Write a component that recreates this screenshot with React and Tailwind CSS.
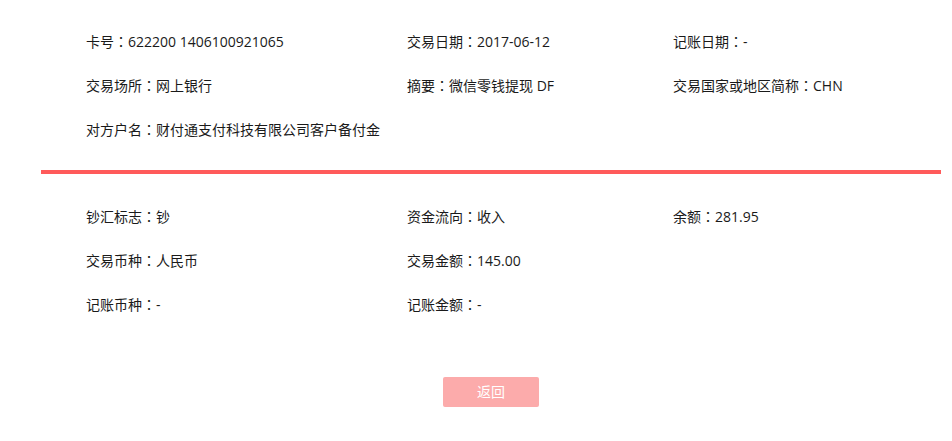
import React from "react";

const top = [
  ["卡号：622200 1406100921065", "交易日期：2017-06-12", "记账日期：-"],
  ["交易场所：网上银行", "摘要：微信零钱提现 DF", "交易国家或地区简称：CHN"],
  ["对方户名：财付通支付科技有限公司客户备付金", "", ""],
];

const bottom = [
  ["钞汇标志：钞", "资金流向：收入", "余额：281.95"],
  ["交易币种：人民币", "交易金额：145.00", ""],
  ["记账币种：-", "记账金额：-", ""],
];

// full-width colon centred, like the original font
function Cell({ text }) {
  if (!text) return <div />;
  const [label, value] = text.split("：");
  return (
    <div className="whitespace-nowrap">
      {label}
      <span style={{ fontFamily: '"Noto Sans CJK TC", sans-serif' }}>：</span>
      {value}
    </div>
  );
}

function Rows({ rows }) {
  return (
    <div className="pl-[45px]">
      {rows.map((row, i) => (
        <div key={i} className="grid grid-cols-[321px_266px_1fr] h-[44px] items-center">
          {row.map((cell, j) => (
            <Cell key={j} text={cell} />
          ))}
        </div>
      ))}
    </div>
  );
}

export default function App() {
  return (
    <div
      className="w-[952px] h-[441px] bg-white text-[14px] leading-[20px] text-[#1a1a1a]"
      style={{ fontFamily: '"Open Sans", "Noto Sans CJK SC", sans-serif' }}
    >
      <div className="ml-[41px] w-[900px] pt-[19px]">
        <Rows rows={top} />
        <div className="mt-[19px] h-[4px] bg-[#ff5a5a]" />
        <div className="mt-[20px]">
          <Rows rows={bottom} />
        </div>
        <div className="flex justify-center mt-[51px]">
          <button className="w-[96px] h-[30px] rounded-[2px] bg-[#fcabab] text-white text-[14px]">
            返回
          </button>
        </div>
      </div>
    </div>
  );
}
